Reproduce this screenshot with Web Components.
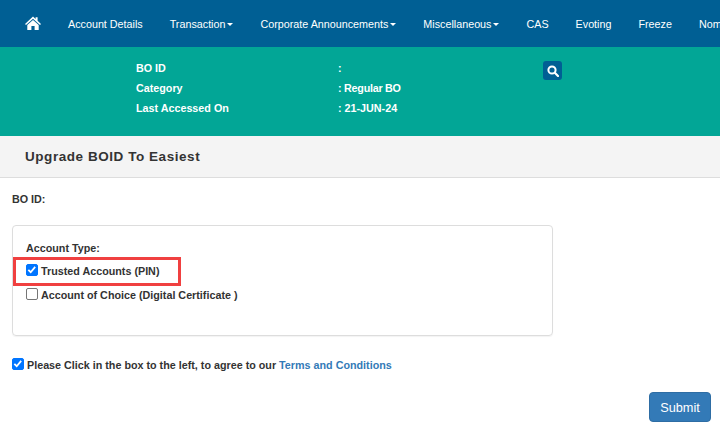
<!DOCTYPE html>
<html><head><meta charset="utf-8"><style>
html,body{margin:0;padding:0;background:#fff}
body{width:720px;height:429px;overflow:hidden;font-family:"Liberation Sans",Arial,sans-serif;font-size:10.75px;color:#333}
</style></head><body>
<app-nav></app-nav>
<info-band></info-band>
<page-heading>Upgrade BOID To Easiest</page-heading>
<upgrade-form></upgrade-form>
<script>
function def(name,html){customElements.define(name,class extends HTMLElement{constructor(){super();this.attachShadow({mode:'open'}).innerHTML=html}})}
def('nav-item',`<style>:host{display:block;flex:none;color:#fff;font-size:10.76px;white-space:nowrap}
.c{display:inline-block;width:0;height:0;margin-left:2px;vertical-align:middle;border-top:3px solid #fff;border-left:3px solid transparent;border-right:3px solid transparent}
:host(:not([menu])) .c{display:none}</style><slot></slot><span class="c"></span>`);
def('app-nav',`<style>:host{display:flex;height:47px;background:#005f94;align-items:center;overflow:hidden;padding-left:25px;box-sizing:border-box}
svg{display:block;flex:none;margin:-2px 27px 0 0}
nav-item{margin-right:27px}</style>
<svg width="16" height="14" viewBox="0 0 16 14"><path fill="#fff" d="M8 0.6 L10.6 3 V1.2 H12.6 V4.8 L16 8 L15 9 L8 2.7 L1 9 L0 8 Z M8 3.9 L13.7 9 V14 H9.6 V10 H6.4 V14 H2.3 V9 Z"/></svg>
<nav-item>Account Details</nav-item><nav-item menu>Transaction</nav-item><nav-item menu>Corporate Announcements</nav-item><nav-item menu>Miscellaneous</nav-item><nav-item>CAS</nav-item><nav-item>Evoting</nav-item><nav-item>Freeze</nav-item><nav-item>Nominee</nav-item>`);
def('info-band',`<style>:host{display:block;height:89px;background:#02a696;color:#fff;font-weight:700;font-size:10.75px;box-sizing:border-box;padding:14px 0 0 136px}
.g{display:grid;grid-template-columns:202px 205px 18px;grid-auto-rows:20px;align-items:start}
.b{grid-column:3;grid-row:1;width:19px;height:19px;background:#005f94;border-radius:3px;display:flex;align-items:center;justify-content:center}
span{line-height:14px}.t{letter-spacing:-.25px}</style>
<div class="g"><span>BO ID</span><span>:</span><div class="b"><svg width="12" height="12" viewBox="0 0 12 12"><circle cx="5" cy="5" r="3.6" fill="none" stroke="#fff" stroke-width="2"/><path d="M7.8 7.8 L11 11" stroke="#fff" stroke-width="2.2" stroke-linecap="round"/></svg></div>
<span>Category</span><span class="t">: Regular BO</span><span></span>
<span>Last Accessed On</span><span>: 21-JUN-24</span><span></span></div>`);
def('page-heading',`<style>:host{display:block;height:42px;box-sizing:border-box;background:#f4f4f4;border-bottom:1px solid #ddd;padding:13px 0 0 25px;font-size:13.5px;font-weight:700;line-height:16px;color:#333;letter-spacing:.55px}</style><slot></slot>`);
def('check-row',`<style>:host{display:flex;align-items:flex-start;font-weight:700;font-size:10.75px;color:#333;line-height:14px}
.b{flex:none;width:11.5px;height:11.5px;border-radius:2px;margin:0 3.5px 0 0;box-sizing:border-box;border:1px solid #767676;background:#fff;display:block}
:host([checked]) .b{background:#0075ff;border-color:#0075ff}
svg{display:none;width:9.5px;height:9.5px}
:host([checked]) svg{display:block}
a{color:#337ab7}</style><span class="b"><svg viewBox="0 0 10 10"><path d="M1.4 5.1 L3.9 7.6 L8.6 2" fill="none" stroke="#fff" stroke-width="1.9"/></svg></span><span><slot></slot></span>`);
def('upgrade-form',`<style>:host{display:block;padding:14px 9px 0 12px;font-weight:700;font-size:10.75px;line-height:14px}
.panel{margin-top:19px;width:541px;height:111px;box-sizing:border-box;border:1px solid #ddd;border-radius:4px;box-shadow:0 1px 1px rgba(0,0,0,.05);padding:15px 13px 0 13px}
.hl{position:relative;margin-top:9px}
.hl::before{content:"";position:absolute;left:-13px;top:-7px;width:168px;height:29px;box-sizing:border-box;border:3px solid #f04040}
.second{margin-top:10px}
.agree{margin-top:22px}
a{color:#337ab7;text-decoration:none}
.act{display:flex;justify-content:flex-end;margin-top:20px}
button{width:62px;height:30px;border:1px solid #2e6da4;border-radius:4px;background:#337ab7;color:#fff;font:12.75px "Liberation Sans",Arial,sans-serif;padding:0}
</style>
<div>BO ID:</div>
<div class="panel"><div>Account Type:</div>
<check-row class="hl" checked>Trusted Accounts (PIN)</check-row>
<check-row class="second">Account of Choice (Digital Certificate )</check-row></div>
<check-row class="agree" checked>Please Click in the box to the left, to agree to our&nbsp;<a href="#">Terms and Conditions</a></check-row>
<div class="act"><button>Submit</button></div>`);
</script>
</body></html>
